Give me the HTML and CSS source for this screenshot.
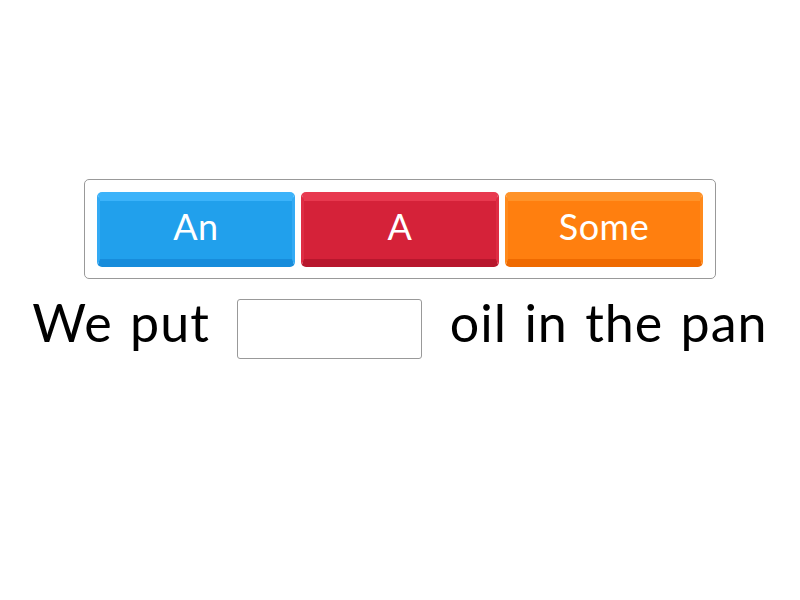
FILE: index.html
```html
<!DOCTYPE html>
<html>
<head>
<meta charset="utf-8">
<link rel="stylesheet" href="styles.css">
</head>
<body>
<div class="page">
  <div class="options">
    <div class="opt blue">An</div>
    <div class="opt red">A</div>
    <div class="opt orange">Some</div>
  </div>
  <div class="sentence">
    <span class="word">We put</span>
    <span class="blank"></span>
    <span class="word">oil in the pan</span>
  </div>
</div>
</body>
</html>
```
FILE: styles.css
```css
html, body {
  margin: 0;
  padding: 0;
  background: #fff;
}
.page {
  width: 800px;
  height: 600px;
  padding-top: 179px;
  box-sizing: border-box;
  font-family: Lato, "Open Sans", sans-serif;
  display: flex;
  flex-direction: column;
  align-items: center;
}
.options {
  width: 632px;
  height: 100px;
  box-sizing: border-box;
  border: 1px solid #999;
  border-radius: 5px;
  padding: 12px 12px 11px;
  display: flex;
  gap: 6px;
}
.opt {
  flex: 1;
  box-sizing: border-box;
  border-radius: 5px;
  border-style: solid;
  border-width: 9px 3px 8px 3px;
  color: #fff;
  font-size: 36px;
  letter-spacing: 0.5px;
  display: flex;
  align-items: center;
  justify-content: center;
  padding-bottom: 9px;
}
.blue {
  background: #21a0ec;
  border-color: #3cb3fa #33aaf4 #178cdb #33aaf4;
}
.red {
  background: #d52239;
  border-color: #e8394f #de2d44 #b8172d #de2d44;
}
.orange {
  background: #ff7f0f;
  border-color: #ff9329 #ff8a1c #ef6a00 #ff8a1c;
}
.sentence {
  margin-top: 13px;
  display: flex;
  align-items: center;
  margin-left: 0;
}
.word {
  font-size: 52px;
  letter-spacing: 1px;
  word-spacing: 3px;
  color: #000;
  line-height: 60px;
  margin-bottom: 14px;
}
.blank {
  width: 185px;
  height: 60px;
  box-sizing: border-box;
  border: 1px solid #999;
  border-radius: 3px;
  margin: 0 28px 0 27px;
}
```
